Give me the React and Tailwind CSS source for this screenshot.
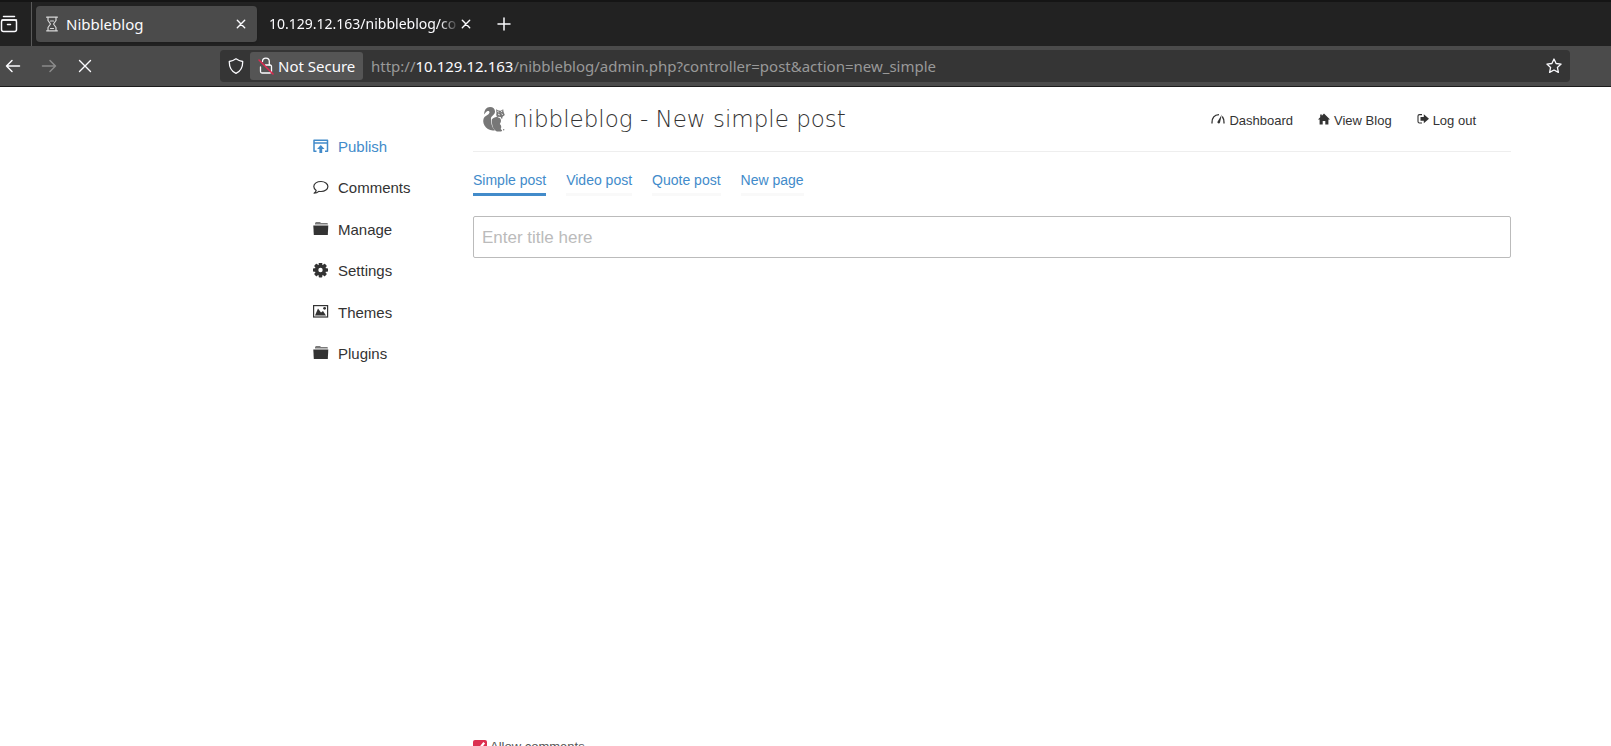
import { useState } from 'react';

const strokeProps = {
  fill: 'none',
  stroke: 'currentColor',
  strokeLinecap: 'round',
  strokeLinejoin: 'round',
};

function FolderIcon() {
  return (
    <svg viewBox="0 0 16 16" className="size-4" fill="currentColor" aria-hidden="true">
      <path d="M2 3.500V2l1-1h4l1 1h6.500l.5 1.500z" opacity=".65" />
      <path d="M.3 4.500h15L14.800 14H.8z" />
    </svg>
  );
}

function PublishIcon() {
  return (
    <svg viewBox="0 0 16 16" className="size-4" {...strokeProps} strokeLinecap="butt" strokeWidth="1.500" aria-hidden="true">
      <path d="M3.500 12.250H1V1.250h13.500v11H12M1 4h13.500" />
      <path d="M7.800 6l3.700 4H9.200v4H6.400v-4H4.100z" fill="currentColor" stroke="none" />
    </svg>
  );
}

function CommentIcon() {
  return (
    <svg viewBox="0 0 16 16" className="size-4" {...strokeProps} strokeWidth="1.200" aria-hidden="true">
      <path d="M8 1.500C4 1.500.8 3.500.8 6.500c0 1.700 1 3 2.400 3.900C3.100 11.800 2.200 12.500 1.100 13.200c2 0 3.500-.7 4.700-1.900.7.150 1.500.2 2.300.2 3.800 0 6.800-2.100 6.800-5S11.800 1.500 8 1.500z" />
    </svg>
  );
}

function GearIcon() {
  return (
    <svg viewBox="0 0 16 16" className="size-4" aria-hidden="true">
      <g fill="currentColor" transform="translate(-.5 -1)">
        <rect x="6.200" y="0.500" width="3.600" height="15" rx=".8" />
        <rect x="6.200" y="0.500" width="3.600" height="15" rx=".8" transform="rotate(45 8 8)" />
        <rect x="6.200" y="0.500" width="3.600" height="15" rx=".8" transform="rotate(90 8 8)" />
        <rect x="6.200" y="0.500" width="3.600" height="15" rx=".8" transform="rotate(135 8 8)" />
        <circle cx="8" cy="8" r="5.600" />
        <circle cx="8" cy="8" r="2.200" fill="#fff" />
      </g>
    </svg>
  );
}

function PictureIcon() {
  return (
    <svg viewBox="0 0 16 16" className="size-4" aria-hidden="true">
      <rect x=".6" y="1.600" width="14" height="11.400" fill="none" stroke="currentColor" strokeWidth="1.200" />
      <path d="M2 11.500l3-7 3 4L10 7l3 4.500z" fill="currentColor" />
      <circle cx="11.600" cy="4.300" r="1.400" fill="currentColor" />
    </svg>
  );
}

function DashboardIcon() {
  return (
    <svg viewBox="0 0 14 12" className="h-3 w-3.5" {...strokeProps} strokeLinecap="butt" strokeWidth="1.300" aria-hidden="true">
      <path d="M1 10.500C.8 5.500 3 2 8 1.700M11.300 3.500c1.300 1.700 1.800 4 1.700 7" />
      <path d="M10.800 1.500L9 9.500c-.5 1.600-3 1-2.500-.8z" fill="currentColor" stroke="none" />
    </svg>
  );
}

function HomeIcon() {
  return (
    <svg viewBox="0 0 12 12" className="size-3" fill="currentColor" aria-hidden="true">
      <path d="M6 .5L12 6.500h-1.600V11.500H7.300V8H4.700v3.500H1.600V6.500H0L2.200 4.200V1.500h1.600v1.200z" />
    </svg>
  );
}

function LogoutIcon() {
  return (
    <svg viewBox="0 0 12 12" className="size-3" aria-hidden="true">
      <path d="M5 1.600H2.500C1.500 1.600 1 2.200 1 3v5.500c0 1 .5 1.500 1.500 1.500H5" fill="none" stroke="currentColor" strokeWidth="1.100" />
      <path d="M3.500 4h3.300V1.300L12 5.800 6.800 10.300V7.700H3.500z" fill="currentColor" />
    </svg>
  );
}

function SquirrelLogo() {
  return (
    <svg viewBox="0 0 24 26" className="h-[26px] w-6 shrink-0" aria-hidden="true">
      {/* tail */}
      <path
        fill="#777"
        d="M2.200 8.500C2 4 4.500 1 8 1c3.200 0 5 2 5 4.500 0 2.200-1.300 3.300-2.700 4.500-1.200 1-1.500 2-1.300 3.500.3 2 .3 3.500.7 5.200.5 2.200 1.600 4 3.300 5.500C8.500 25.200 4.500 23 2.500 19.500.8 16.500.8 13 2.500 11c1.500-1.700 4.500-2.300 5-4.500.2-1.200-.8-1.800-1.900-1.500C4.300 5.300 3.500 6.700 2.200 8.500z"
      />
      {/* body and paws */}
      <path
        fill="#777"
        d="M9.800 13.500c1-1.500 3-2.300 5-2.700l3.200 1.400c1 1.200 1.200 2 .8 3.800l-1 2c1.500 1.300 1.900 3.300.9 5l1.300 1.300c.2.700-.2 1.200-1 1.200h-4.200c-2.800-1.300-4-3.700-4.500-6.500-.3-1.900-.7-3.700-.5-5.500z"
      />
      {/* head */}
      <path
        fill="#777"
        d="M14 3.200l2.500 1.300 2.300.2 2.400-1.500.4 2.800 1.200 3-2.200 1.700-.5 2.200-1.800-1.300-2.600-.3C14.500 10.500 13.800 9 14.500 7z"
      />
      <path d="M15.300 4.800l1.500 1.700M20.300 4.800l-1.300 1.400M16 8l1.800 1M19.500 7.800l1.400.8M16.500 11.200l2.500.5" fill="none" stroke="#fff" strokeWidth=".9" />
      <circle cx="21.700" cy="23.700" r=".7" fill="#777" />
    </svg>
  );
}

function CloseIcon() {
  return (
    <svg viewBox="0 0 10 10" className="size-2.5" {...strokeProps} strokeWidth="1.400" aria-hidden="true">
      <path d="M1.300 1.300l7.400 7.400M8.700 1.300L1.300 8.700" />
    </svg>
  );
}

function BrowserTabs() {
  return (
    <div className="flex h-[46px] items-center border-t-2 border-[#151515] bg-[#222222] text-[15px] text-[#fbfbfe]">
      <button type="button" aria-label="Recent browsing" className="flex h-full w-8 shrink-0 items-center border-r border-[#5a5a5a]">
        <svg viewBox="0 0 18 18" className="size-[18px]" {...strokeProps} strokeWidth="1.500" aria-hidden="true">
          <path d="M3.500 1.500h11M2 5h14.500M7.500 9.500h3" />
          <rect x="1.500" y="5" width="15" height="11.500" rx="2" />
        </svg>
      </button>
      <div className="ml-1 flex h-9 w-[221px] shrink-0 items-center rounded bg-[#4b4b4b] pr-[11px] pl-2.5 shadow-sm">
        <svg viewBox="0 0 12 16" className="h-4 w-3 shrink-0 text-[#d8d8d8]" {...strokeProps} strokeWidth="1.200" aria-hidden="true">
          <path d="M.6 1.200h10.800M.6 14.800h10.800M2 1.200v3.300L4.500 8 2 11.500v3.300M10 1.200v3.300L7.500 8l2.500 3.500v3.300" />
          <path d="M4.500 5h3M4.500 12.500h3" />
        </svg>
        <span className="ml-2 flex-1 truncate">Nibbleblog</span>
        <button type="button" aria-label="Close tab"><CloseIcon /></button>
      </div>
      <div className="flex h-9 w-56 shrink-0 items-center pr-2.5 pl-3">
        <span className="flex-1 mask-r-from-90% text-sm whitespace-nowrap">10.129.12.163/nibbleblog/co</span>
        <button type="button" aria-label="Close tab" className="ml-0.5"><CloseIcon /></button>
      </div>
      <button type="button" aria-label="New tab" className="ml-4">
        <svg viewBox="0 0 14 14" className="size-3.5" {...strokeProps} strokeWidth="1.500" aria-hidden="true">
          <path d="M7 1v12M1 7h12" />
        </svg>
      </button>
    </div>
  );
}

function BrowserToolbar() {
  return (
    <div className="flex h-[41px] items-center border-b border-[#1c1c1c] bg-[#4b4b4b] pr-[41px] pl-[5px] text-[#fbfbfe]">
      <div className="flex w-[215px] shrink-0 items-center gap-5">
        <button type="button" aria-label="Back">
          <svg viewBox="0 0 16 16" className="size-4" {...strokeProps} strokeWidth="1.500" aria-hidden="true">
            <path d="M14.500 8h-13M7 2.500L1.500 8 7 13.500" />
          </svg>
        </button>
        <button type="button" aria-label="Forward" className="text-[#8b8b8b]">
          <svg viewBox="0 0 16 16" className="size-4" {...strokeProps} strokeWidth="1.500" aria-hidden="true">
            <path d="M1.500 8h13M9 2.500L14.500 8 9 13.500" />
          </svg>
        </button>
        <button type="button" aria-label="Stop">
          <svg viewBox="0 0 16 16" className="size-4" {...strokeProps} strokeWidth="1.400" aria-hidden="true">
            <path d="M2.500 2.500l11 11M13.500 2.500l-11 11" />
          </svg>
        </button>
      </div>
      <div className="flex h-8 min-w-0 flex-1 items-center rounded bg-[#353535] pr-2 text-[15px]">
        <svg viewBox="0 0 16 16" className="mr-1.5 ml-2 size-4 shrink-0" {...strokeProps} strokeWidth="1.300" aria-hidden="true">
          <path d="M8 .8c2.200 1.700 4.300 2.400 6.700 2.700.1 5.500-1.700 9.500-6.700 11.800C3 13 1.200 9 1.300 3.500 3.700 3.200 5.800 2.500 8 .8z" />
        </svg>
        <button type="button" className="flex h-7 w-[113px] shrink-0 items-center rounded-[3px] bg-[#555555] pl-2 whitespace-nowrap">
          <svg viewBox="0 0 16 18" className="mr-1 h-[18px] w-4 shrink-0" {...strokeProps} strokeWidth="1.300" aria-hidden="true">
            <path d="M4.500 4.500a3.400 3.400 0 0 1 6.800 0V8" />
            <path d="M2.500 10v4.500c0 1 .5 1.500 1.500 1.500h8c1 0 1.500-.5 1.500-1.500v-5C13.500 8.500 13 8 12 8H7.500" />
            <path d="M1 3l14 14" stroke="#e22850" strokeWidth="1.500" />
          </svg>
          Not Secure
        </button>
        <div className="ml-2 flex-1 truncate text-[#999999]">
          http://<span className="text-[#fbfbfe]">10.129.12.163</span>/nibbleblog/admin.php?controller=post&amp;action=new_simple
        </div>
        <button type="button" aria-label="Bookmark this page">
          <svg viewBox="0 0 16 16" className="size-4" {...strokeProps} strokeWidth="1.300" aria-hidden="true">
            <path d="M8 1l2.100 4.500 5 .6-3.700 3.300 1 5L8 12l-4.400 2.400 1-5L.9 6.100l5-.6z" />
          </svg>
        </button>
      </div>
    </div>
  );
}

const menu = [
  { label: 'Publish', icon: PublishIcon, active: true },
  { label: 'Comments', icon: CommentIcon },
  { label: 'Manage', icon: FolderIcon },
  { label: 'Settings', icon: GearIcon },
  { label: 'Themes', icon: PictureIcon },
  { label: 'Plugins', icon: FolderIcon },
];

const shortcuts = [
  { label: 'Dashboard', icon: DashboardIcon },
  { label: 'View Blog', icon: HomeIcon },
  { label: 'Log out', icon: LogoutIcon },
];

const postTabs = ['Simple post', 'Video post', 'Quote post', 'New page'];

export default function App() {
  const [title, setTitle] = useState('');
  const [allowComments, setAllowComments] = useState(true);

  return (
    <div className="flex h-screen flex-col overflow-hidden bg-white font-['Liberation_Sans',Arial,sans-serif] text-[#333333]">
      <header className="shrink-0 font-['Noto_Sans',sans-serif]">
        <BrowserTabs />
        <BrowserToolbar />
      </header>

      <div className="flex min-h-0 flex-1 pr-[100px] pl-[313px]">
        {/* Sidebar */}
        <nav className="mt-[49px] flex h-[228px] w-40 shrink-0 flex-col justify-between text-[15px] leading-[21px]">
          {menu.map(({ label, icon: Icon, active }) => (
            <a key={label} href="#" className={active ? 'flex items-center gap-[9px] text-[#428bca]' : 'flex items-center gap-[9px]'}>
              <Icon />
              {label}
            </a>
          ))}
        </nav>

        {/* Main column */}
        <main className="flex min-w-0 flex-1 flex-col">
          <div className="flex h-[65px] shrink-0 items-center border-b border-[#eeeeee] pr-[35px] pl-[9px]">
            <SquirrelLogo />
            <h1 className="ml-[7px] flex-1 font-['DejaVu_Sans',sans-serif] text-[23px] font-extralight">nibbleblog - New simple post</h1>
            <div className="flex gap-[25px] pt-[3px] text-[13px] leading-5">
              {shortcuts.map(({ label, icon: Icon }) => (
                <a key={label} href="#" className="flex items-center gap-1">
                  <span className="pb-1"><Icon /></span>
                  {label}
                </a>
              ))}
            </div>
          </div>

          <div className="mt-[18px] flex shrink-0 gap-5 text-sm text-[#428bca]">
            {postTabs.map((label, i) => (
              <a
                key={label}
                href="#"
                className={i === 0 ? 'border-b-3 border-[#428bca] pb-[3px]' : 'border-b-3 border-[#f9f9f9] pb-[3px]'}
              >
                {label}
              </a>
            ))}
          </div>

          <input
            type="text"
            aria-label="Title"
            placeholder="Enter title here"
            value={title}
            onChange={(e) => setTitle(e.target.value)}
            className="mt-5 h-[42px] w-full shrink-0 rounded-xs border border-[#bbbbbb] px-2 pt-0.5 text-[17px] outline-none placeholder:text-[#bbbbbb]"
          />

          {/* Editor loads here */}
          <div className="h-[479px] shrink-0" />

          <label className="flex shrink-0 items-center gap-[3px] text-[13px] leading-5 text-[#555555]">
            <input
              type="checkbox"
              checked={allowComments}
              onChange={(e) => setAllowComments(e.target.checked)}
              className="size-3.5 accent-[#dc3050]"
            />
            Allow comments
          </label>
        </main>
      </div>
    </div>
  );
}
